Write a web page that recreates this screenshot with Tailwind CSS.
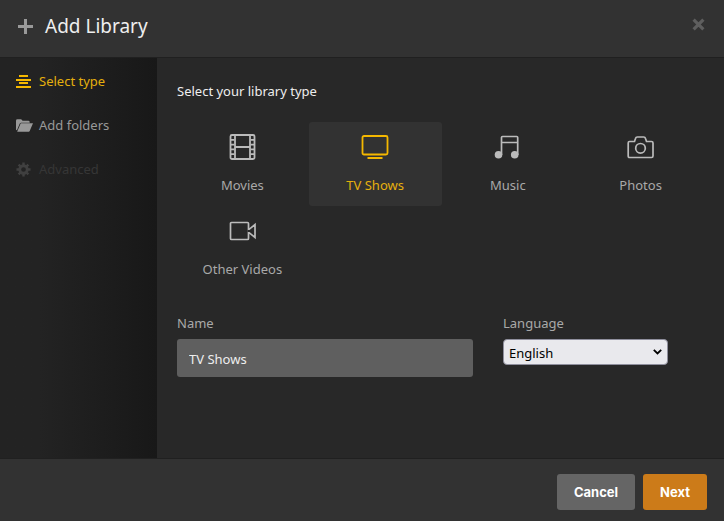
<!DOCTYPE html>
<html lang="en">
<head>
    <meta charset="UTF-8">
    <meta name="viewport" content="width=device-width, initial-scale=1.0">
    <title>Add Library</title>
    <script src="https://cdn.jsdelivr.net/npm/@tailwindcss/browser@4"></script>
</head>
<body class="bg-[#282828] font-['Noto_Sans',sans-serif] text-sm text-[#a9a9a9]">
    <div class="flex min-h-screen flex-col">
        <header class="flex h-[58px] items-center justify-between border-b border-[#202020] bg-[#323232] pr-[19px] pb-1 pl-[18px]">
            <h1 class="flex items-center gap-3 text-[19px] text-[#eee]">
                <svg class="size-[15px] text-[#999]" viewBox="0 0 15 15" fill="currentColor">
                    <path d="M6 0h3v6h6v3H9v6H6V9H0V6h6z"/>
                </svg>
                Add Library
            </h1>
            <button type="button" aria-label="Close" class="mb-1 text-[#5e5e5e]">
                <svg class="size-[13px]" viewBox="0 0 13 13" stroke="currentColor" stroke-width="3.2">
                    <path d="M1.6 1.6l9.8 9.8M11.4 1.6l-9.8 9.8"/>
                </svg>
            </button>
        </header>

        <div class="flex flex-1">
            <!-- Steps -->
            <nav class="w-[157px] shrink-0 bg-linear-to-r from-[#232323] from-25% to-[#181818] pt-px pl-4">
                <a href="#" class="flex h-11 items-center gap-2 text-[13px] text-[#e5b00d]">
                    <svg class="h-[13px] w-[15px] text-[#f5b800]" viewBox="0 0 15 13" fill="currentColor">
                        <path d="M3 0h9v2H3zM0 4h15v2H0zM3 7h9v2H3zM0 11h15v2H0z"/>
                    </svg>
                    Select type
                </a>
                <a href="#" class="flex h-11 items-center gap-1.5 text-[13px] text-[#999]">
                    <svg class="h-[13px] w-[17px]" viewBox="0 0 18 13" fill="currentColor">
                        <path d="M0 11V1.500Q0 0 1.500 0H5.500L7 1.500H13Q14.500 1.500 14.500 3V3.500H5.500Q4.500 3.500 4 4.500L1 11.500z"/>
                        <path d="M5 4.200H18L14.500 12.300Q14.200 13 13.500 13H1.200z"/>
                    </svg>
                    Add folders
                </a>
                <a href="#" class="flex h-11 items-center gap-2 text-[13px] text-[#363636]">
                    <svg class="size-[15px] text-[#404040]" viewBox="0 0 16 16" fill="none" stroke="currentColor">
                        <circle cx="8" cy="8" r="4" stroke-width="3"/>
                        <path d="M8 .5v3M8 12.500v3M.5 8h3M12.500 8h3M2.800 2.800l2 2M11.200 11.200l2 2M2.800 13.200l2-2M11.200 4.800l2-2" stroke-width="2.600"/>
                    </svg>
                    Advanced
                </a>
            </nav>

            <main class="flex-1 pt-[23px] pr-4 pb-4 pl-5">
                <h2 class="text-[13px] leading-5 text-[#eee]">Select your library type</h2>

                <div class="mt-[21px] mr-px -ml-px grid grid-cols-4 text-[13px]">
                    <button type="button" class="flex h-21 flex-col items-center rounded-[3px] pt-[11px]">
                        <svg class="size-7 text-[#bbb]" viewBox="-1 0 28 28" fill="none" stroke="currentColor" stroke-width="1.800">
                            <rect x="1.500" y="2" width="24" height="24" rx="1.500"/>
                            <path d="M6 2v24M21 2v24M6 14h15"/>
                            <path d="M1.500 6.800h4M1.500 11.600h4M1.500 16.400h4M1.500 21.200h4M21.500 6.800h4M21.500 11.600h4M21.500 16.400h4M21.500 21.200h4"/>
                        </svg>
                        <span class="mt-3.5 leading-5">Movies</span>
                    </button>
                    <button type="button" class="flex h-21 flex-col items-center rounded-[3px] bg-[#323232] pt-[11px] text-[#e5b00d]">
                        <svg class="size-7 text-[#f5b800]" viewBox="0 0 28 28" fill="none" stroke="currentColor" stroke-width="1.800">
                            <rect x="1.500" y="3" width="25" height="18.500" rx="1.500"/>
                            <path d="M6.500 25h15" stroke-width="2"/>
                        </svg>
                        <span class="mt-3.5 leading-5">TV Shows</span>
                    </button>
                    <button type="button" class="flex h-21 flex-col items-center rounded-[3px] pt-[11px]">
                        <svg class="size-7 text-[#bbb]" viewBox="0 0 28 28" fill="none" stroke="currentColor" stroke-width="1.700">
                            <path d="M7.500 22V4.500Q7.500 3.500 8.500 3.500H22.700Q23.700 3.500 23.700 4.500V22M7.500 9.500H23.700"/>
                            <circle cx="4.500" cy="21.700" r="3.800" fill="currentColor" stroke="none"/>
                            <circle cx="20.700" cy="21.700" r="3.800" fill="currentColor" stroke="none"/>
                        </svg>
                        <span class="mt-3.5 leading-5">Music</span>
                    </button>
                    <button type="button" class="flex h-21 flex-col items-center rounded-[3px] pt-[11px]">
                        <svg class="size-7 text-[#bbb]" viewBox="0.5 0 28 28" fill="none" stroke="currentColor" stroke-width="1.700">
                            <path d="M3 8.500H8L9 5.500Q9.400 4 10.800 4H17.200Q18.600 4 19 5.500L20 8.500H25Q26.500 8.500 26.500 10V23Q26.500 24.500 25 24.500H3Q1.700 24.500 1.700 23V10Q1.700 8.500 3 8.500z"/>
                            <circle cx="14" cy="15.300" r="4.800"/>
                        </svg>
                        <span class="mt-3.5 leading-5">Photos</span>
                    </button>
                    <button type="button" class="flex h-21 flex-col items-center rounded-[3px] pt-[11px]">
                        <svg class="size-7 text-[#bbb]" viewBox="-0.5 0 28 28" fill="none" stroke="currentColor" stroke-width="1.700">
                            <path d="M20 12.800V6.500Q20 5.500 19 5.500H3Q2 5.500 2 6.500V21.500Q2 22.500 3 22.500H19Q20 22.500 20 21.500V15.200L26.500 20.500V7.500z"/>
                            <path d="M19 14h3.500" stroke="#282828" stroke-width="2"/>
                        </svg>
                        <span class="mt-3.5 leading-5">Other Videos</span>
                    </button>
                </div>

                <form class="mt-6 flex gap-[30px] text-[13px]">
                    <div class="flex-1">
                        <label for="name" class="block leading-[18px]">Name</label>
                        <input id="name" type="text" value="TV Shows" class="mt-[7px] h-[38px] w-full rounded-[3px] bg-[#5f5f5f] px-3 pt-0.5 text-[#eee] outline-none">
                    </div>
                    <div class="mr-10 w-[165px]">
                        <label for="language" class="block leading-[18px]">Language</label>
                        <div class="relative mt-[7px]">
                            <select id="language" class="block h-[26px] w-full appearance-none rounded-[4px] border border-[#8f8f9d] bg-[#e9e9ed] pt-0.5 pr-6 pl-[5px] text-black">
                                <option>English</option>
                            </select>
                            <svg class="pointer-events-none absolute top-[10px] right-[6px] h-[6px] w-[9px] text-black" viewBox="0 0 9 6" fill="none" stroke="currentColor" stroke-width="1.800">
                                <path d="M0.800 0.800l3.700 3.700 3.700-3.700"/>
                            </svg>
                        </div>
                    </div>
                </form>
            </main>
        </div>

        <footer class="flex h-[63px] items-center justify-end gap-2 border-t border-[#202020] bg-[#323232] pt-1 pr-[17px] font-['Inter',sans-serif] text-[13px] font-bold text-white">
            <button type="button" class="h-9 rounded-[3px] bg-[#656565] px-[17px]">Cancel</button>
            <button type="button" class="h-9 rounded-[3px] bg-[#cc7b19] px-[17px]">Next</button>
        </footer>
    </div>
</body>
</html>
